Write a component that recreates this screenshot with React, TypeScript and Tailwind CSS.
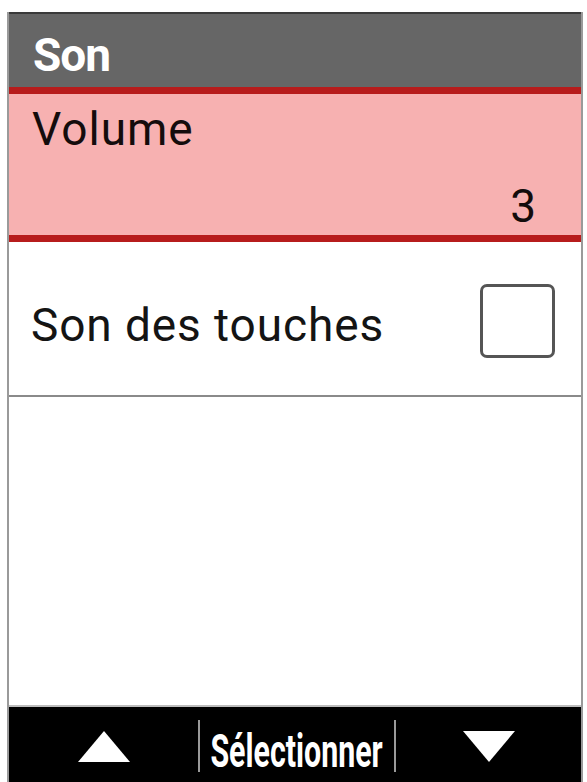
import React from "react";

// Triangle used for the up / down soft keys
const Arrow = ({ up }: { up: boolean }) => (
  <svg width="54" height="33" viewBox="0 0 54 33" className="mt-[3px]">
    {up ? <polygon points="27,1 53,32 1,32" fill="#fff" /> : <polygon points="1,1 53,1 27,32" fill="#fff" />}
  </svg>
);

export default function App() {
  return (
    <div className="w-[587px] h-[782px] bg-white pt-[12px] overflow-hidden" style={{ fontFamily: "Roboto, 'Liberation Sans', sans-serif" }}>
      <div className="ml-[7px] w-[576px] h-[770px] flex flex-col border-x-2 border-[#9a9a9a]">
        {/* Titre */}
        <div className="h-[75px] shrink-0 bg-[#666666] border-t-2 border-[#3a3a3a] pl-[24px] pt-[18px]">
          <span className="block text-[46px] leading-none font-bold tracking-[-1px] text-white">Son</span>
        </div>

        {/* Volume (sélectionné) */}
        <div className="h-[155px] shrink-0 bg-[#f7b1b1] border-y-[7px] border-[#b71c1c] flex flex-col justify-between pl-[23px] pr-[45px] pt-[12px] pb-[6px]">
          <span className="text-[46px] leading-none tracking-[1px] text-[#140c0c]">Volume</span>
          <span className="self-end text-[46px] leading-none text-[#140c0c]">3</span>
        </div>

        {/* Son des touches */}
        <div className="h-[153px] shrink-0 flex items-center justify-between pl-[22px] pr-[26px]">
          <span className="mt-[12px] text-[46px] leading-none tracking-[0.9px] text-[#141414]">Son des touches</span>
          <div className="mt-[5px] w-[75px] h-[74px] rounded-[7px] border-[3px] border-[#555555]" />
        </div>
        <div className="h-[2px] shrink-0 bg-[#8a8a8a]" />

        <div className="flex-1 bg-white" />
        <div className="h-[2px] shrink-0 bg-[#bdbdbd]" />

        {/* Barre des touches */}
        <div className="h-[75px] shrink-0 bg-black flex items-center">
          <div className="w-[189px] flex justify-center">
            <Arrow up={true} />
          </div>
          <div className="w-[2px] h-[52px] mt-[3px] bg-[#9a9a9a]" />
          <div className="w-[194px] flex justify-center overflow-visible">
            <span className="mt-[13px] text-[46px] leading-none font-bold text-white scale-x-[0.66] whitespace-nowrap">Sélectionner</span>
          </div>
          <div className="w-[2px] h-[52px] mt-[3px] bg-[#9a9a9a]" />
          <div className="flex-1 flex justify-center">
            <Arrow up={false} />
          </div>
        </div>
      </div>
    </div>
  );
}
